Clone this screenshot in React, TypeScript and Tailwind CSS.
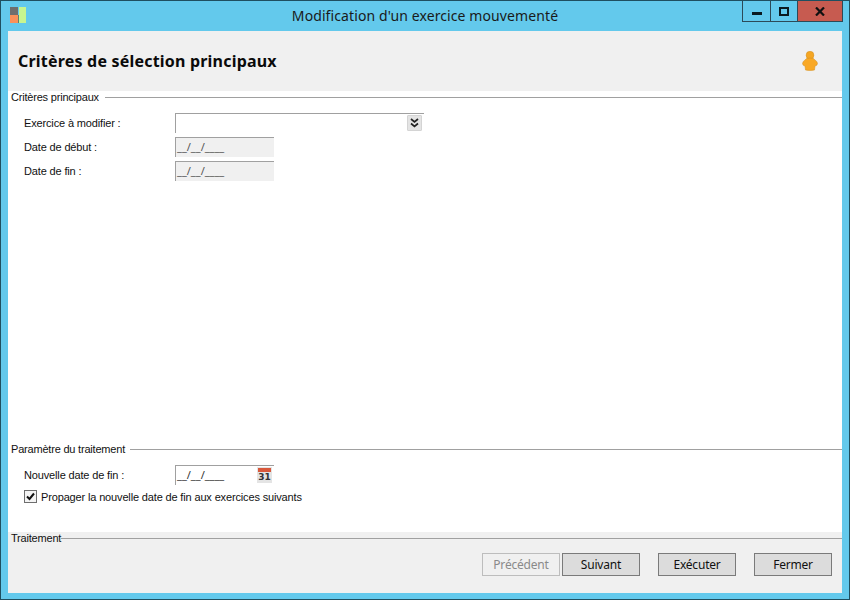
import React from "react";

const ui = { fontFamily: '"Noto Sans", "Liberation Sans", sans-serif' };
const small = { fontFamily: '"Liberation Sans", Arial, sans-serif' };

function Legend({ title, gap }: { title: string; gap: string }) {
  return (
    <div className="flex items-center h-[12px] pl-[3px]">
      <span style={small} className="text-[11px] tracking-[-0.2px] leading-[14px] text-[#111] whitespace-nowrap">{title}</span>
      <div className={`flex-1 h-px bg-[#a0a0a0] ${gap}`} />
    </div>
  );
}

function Label({ children }: { children: React.ReactNode }) {
  return <div style={small} className="w-[151px] shrink-0 text-[11px] tracking-[-0.15px] leading-[14px] text-[#111]">{children}</div>;
}

function DateBox({ bg }: { bg: string }) {
  return (
    <div className={`relative w-[99px] h-[20px] border-t border-l border-[#a0a0a0] ${bg} text-[11px] leading-[18px] pl-[1px] text-[#555]`}>
      __/__/____
    </div>
  );
}

function Btn({ label, disabled }: { label: string; disabled?: boolean }) {
  return (
    <div
      className={
        "w-[78px] h-[23px] flex items-center justify-center text-[12px] tracking-[-0.2px] border " +
        (disabled ? "border-[#bdbdbd] bg-[#f0f0f0] text-[#8a8a8a]" : "border-[#7a7a7a] bg-[#dcdcdc] text-[#111]")
      }
    >
      {label}
    </div>
  );
}

export default function App() {
  return (
    <div style={ui} className="w-[850px] h-[600px] bg-[#63c9ec] border border-[#1f4f60] flex flex-col overflow-hidden">
      {/* Title bar */}
      <div className="h-[30px] shrink-0 flex items-start relative">
        <svg width="26" height="16" viewBox="0 0 26 16" className="ml-[9px] mt-[6px] shrink-0">
          <rect x="0" y="0" width="8" height="8" fill="#6e6e6e" />
          <rect x="0" y="8" width="8" height="8" fill="#f9905a" />
          <rect x="8" y="8" width="1" height="8" fill="#5f7f70" />
          <rect x="9" y="0" width="7" height="16" fill="#c8f58f" />
        </svg>
        <div className="flex-1 text-center text-[14px] tracking-[0.1px] leading-[30px] text-[#1a1a1a] pl-[72px]">
          Modification d'un exercice mouvementé
        </div>
        <div className="flex h-[21px] mr-[6px] border-l border-b border-[#2c4a58] shrink-0">
          <div className="w-[28px] border-r border-[#2c4a58] flex items-center justify-center">
            <div className="w-[10px] h-[3px] bg-[#0a1a20] mt-[4px]" />
          </div>
          <div className="w-[26px] flex items-center justify-center">
            <div className="w-[10px] h-[9px] border-2 border-[#0a1a20]" />
          </div>
          <div className="w-[46px] bg-[#c75b50] border-r border-l border-[#2c4a58] flex items-center justify-center">
            <svg width="10" height="9" viewBox="0 0 10 9">
              <path d="M1 0.5 L9 8.5 M9 0.5 L1 8.5" stroke="#111" strokeWidth="2.2" />
            </svg>
          </div>
        </div>
      </div>

      {/* Client */}
      <div className="ml-[7px] mr-[7px] mb-[6px] flex-1 flex flex-col bg-white min-h-0">
        {/* Header */}
        <div className="h-[60px] shrink-0 bg-[#f0f0f0] flex items-center justify-between pl-[10px] pr-[24px]">
          <h1 className="text-[16px] tracking-[0.2px] font-bold text-[#0a0a0a] leading-[20px]">Critères de sélection principaux</h1>
          <svg width="16" height="20" viewBox="0 0 16 20">
            <circle cx="8" cy="4.2" r="3.9" fill="#f5a623" stroke="#d08f20" strokeWidth="0.5" />
            <path d="M4.5 7.5 Q8 6.5 11.5 7.5 L13 9 Q15.5 10.5 15.5 12.5 Q15.5 14.5 13 15 L12.5 19 Q8 20 3.5 19 L3 15 Q0.5 14.5 0.5 12.5 Q0.5 10.5 3 9 Z" fill="#f9a825" stroke="#d08f20" strokeWidth="0.5" />
          </svg>
        </div>

        {/* Critères principaux */}
        <div className="h-[352px] shrink-0">
          <Legend title="Critères principaux" gap="ml-[6px]" />
          <div className="pl-[16px] pt-[10px] flex flex-col gap-[4px]">
            <div className="flex items-center h-[20px]">
              <Label>Exercice à modifier :</Label>
              <div className="relative w-[249px] h-[20px] border-t border-l border-[#a0a0a0] flex justify-end items-start pt-[1px] pr-[2px]">
                <div className="w-[15px] h-[16px] bg-[#e4e4e4] border border-[#d4d4d4] rounded-[1px] flex items-center justify-center">
                  <svg width="9" height="10" viewBox="0 0 9 10">
                    <path d="M1 1 L4.5 4 L8 1 M1 5.5 L4.5 8.5 L8 5.5" fill="none" stroke="#222" strokeWidth="1.7" />
                  </svg>
                </div>
              </div>
            </div>
            <div className="flex items-center h-[20px]">
              <Label>Date de début :</Label>
              <DateBox bg="bg-[#f0f0f0]" />
            </div>
            <div className="flex items-center h-[20px]">
              <Label>Date de fin :</Label>
              <DateBox bg="bg-[#f0f0f0]" />
            </div>
          </div>
        </div>

        {/* Paramètre du traitement */}
        <div className="h-[89px] shrink-0">
          <Legend title="Paramètre du traitement" gap="ml-[5px]" />
          <div className="pl-[16px] pt-[10px]">
            <div className="flex items-center h-[20px]">
              <Label>Nouvelle date de fin :</Label>
              <div className="relative w-[99px] h-[20px] border-t border-l border-[#a0a0a0] text-[11px] leading-[18px] pl-[1px] text-[#333]">
                __/__/____
                <div className="absolute right-[2px] top-[1px] w-[15px] h-[16px] bg-[#e4e4e4] flex flex-col items-center">
                  <div className="w-[13px] h-[4px] bg-[#d9583b] mt-px" />
                  <span style={{ fontFamily: '"DejaVu Sans", sans-serif' }} className="text-[9px] leading-[10px] font-bold text-[#333]">31</span>
                </div>
              </div>
            </div>
            <div className="flex items-center mt-[5px] h-[13px]">
              <div className="w-[13px] h-[13px] border border-[#6e6e6e] bg-[#f4f4f4] flex items-center justify-center shrink-0">
                <svg width="9" height="9" viewBox="0 0 9 9">
                  <path d="M1 4.5 L3.5 7 L8 1.5" fill="none" stroke="#111" strokeWidth="2" />
                </svg>
              </div>
              <span style={small} className="ml-[4px] text-[11px] tracking-[-0.15px] leading-[14px] text-[#111]">Propager la nouvelle date de fin aux exercices suivants</span>
            </div>
          </div>
        </div>

        {/* Traitement */}
        <div className="flex-1 bg-[#f0f0f0]">
          <Legend title="Traitement" gap="" />
          <div className="flex justify-end pr-[10px] pt-[9px]">
            <Btn label="Précédent" disabled />
            <div className="ml-[2px]"><Btn label="Suivant" /></div>
            <div className="ml-[18px]"><Btn label="Exécuter" /></div>
            <div className="ml-[18px]"><Btn label="Fermer" /></div>
          </div>
        </div>
      </div>
    </div>
  );
}
